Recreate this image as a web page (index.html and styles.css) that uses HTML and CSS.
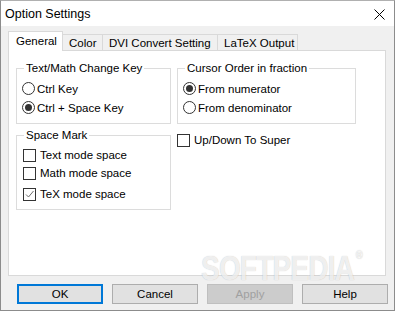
FILE: index.html
```html
<!DOCTYPE html>
<html lang="en">
  <head>
    <meta charset="UTF-8" />
    <title>Option Settings</title>
    <link rel="stylesheet" href="styles.css">
  </head>
  <body>
    <div class="window">
      <div class="titlebar">
        <span class="title">Option Settings</span>
        <svg class="close" width="11" height="11" viewBox="0 0 11 11">
          <path d="M0.5 0.5 L10.5 10.5 M10.5 0.5 L0.5 10.5" stroke="#000" stroke-width="1" fill="none" />
        </svg>
      </div>

      <div class="client">
        <div class="tabs">
          <div class="tab active">General</div>
          <div class="tab">Color</div>
          <div class="tab">DVI Convert Setting</div>
          <div class="tab">LaTeX Output</div>
        </div>

        <div class="panel">
          <div class="col col-left">
            <fieldset class="group group-key">
              <legend>Text/Math Change Key</legend>
              <label class="opt"><span class="radio"></span>Ctrl Key</label>
              <label class="opt"><span class="radio on"></span>Ctrl + Space Key</label>
            </fieldset>

            <fieldset class="group group-space">
              <legend>Space Mark</legend>
              <label class="opt chk"><span class="box"></span>Text mode space</label>
              <label class="opt chk"><span class="box"></span>Math mode space</label>
              <label class="opt chk last"><span class="box on">
                <svg width="11" height="11" viewBox="0 0 11 11">
                  <path d="M2 5.5 L4.5 8 L9.5 2" stroke="#6d6d6d" stroke-width="1" fill="none" />
                </svg>
              </span>TeX mode space</label>
            </fieldset>
          </div>

          <div class="col col-right">
            <fieldset class="group group-cursor">
              <legend>Cursor Order in fraction</legend>
              <label class="opt"><span class="radio on"></span>From numerator</label>
              <label class="opt"><span class="radio"></span>From denominator</label>
            </fieldset>
            <label class="opt chk updown"><span class="box"></span>Up/Down To Super</label>
          </div>
        </div>

        <div class="buttons">
          <button class="btn default">OK</button>
          <button class="btn">Cancel</button>
          <button class="btn" disabled>Apply</button>
          <button class="btn">Help</button>
        </div>
      </div>

      <div class="watermark">SOFTPEDIA<span class="reg">®</span></div>
    </div>
  </body>
</html>
```

FILE: styles.css
```css
body {
  margin: 0;
  font-family: "Liberation Sans", Arial, sans-serif;
  font-size: 11.5px;
  color: #000;
  background: #fff;
}

.window {
  position: relative;
  width: 395px;
  height: 311px;
  box-sizing: border-box;
  border: 1px solid #8c8c8c;
  border-top-color: #b0b0b0;
  background: #f0f0f0;
  overflow: hidden;
}

.titlebar {
  height: 25px;
  background: #fff;
  display: flex;
  align-items: center;
  justify-content: space-between;
  padding: 0 9px 0 4px;
}

.title {
  font-size: 12.5px;
}

.close {
  display: block;
  margin-top: 1px;
}

.client {
  padding: 6px 0 0 7px;
}

/* tabs */
.tabs {
  display: flex;
  align-items: flex-end;
  height: 18px;
  position: relative;
  z-index: 2;
}

.tab {
  height: 16px;
  line-height: 16px;
  box-sizing: border-box;
  border: 1px solid #d9d9d9;
  border-bottom: none;
  background: #f0f0f0;
  padding: 0 6px;
  margin-left: -1px;
  white-space: nowrap;
}

.tab:first-child {
  margin-left: 0;
}

.tab.active {
  height: 20px;
  line-height: 18px;
  margin-bottom: -1px;
  background: #fff;
  padding: 0 7px;
  position: relative;
  z-index: 3;
}

.tab:nth-child(2) { width: 41px; }
.tab:nth-child(3) { width: 116px; }
.tab:nth-child(4) { width: 81px; }
.tab.active { width: 55px; }

.panel {
  width: 378px;
  height: 226px;
  box-sizing: border-box;
  border: 1px solid #d9d9d9;
  background: #fff;
  padding: 10px 0 0 7px;
  display: flex;
  gap: 6px;
}

/* group boxes */
.group {
  margin: 0;
  border: 1px solid #dcdcdc;
  padding: 4px 0 0 5px;
  box-sizing: border-box;
}

.group legend {
  margin-left: 2px;
  padding: 0 2px;
  line-height: 14px;
}

.group-key {
  width: 155px;
  height: 63px;
}

.group-space {
  width: 155px;
  height: 82px;
  margin-top: 4px;
  padding-top: 4px;
}

.group-cursor {
  width: 179px;
  height: 63px;
}

.opt {
  display: flex;
  align-items: center;
  height: 19px;
  white-space: nowrap;
}

.chk {
  height: 18px;
  padding-left: 1px;
}

.chk.last {
  margin-top: 3px;
}

.radio {
  width: 13px;
  height: 13px;
  box-sizing: border-box;
  border: 1px solid #333;
  border-radius: 50%;
  background: #fff;
  margin-right: 2px;
  display: flex;
  align-items: center;
  justify-content: center;
}

.radio.on::after {
  content: "";
  width: 7px;
  height: 7px;
  border-radius: 50%;
  background: #333;
}

.box {
  width: 13px;
  height: 13px;
  box-sizing: border-box;
  border: 1px solid #333;
  background: #fff;
  margin-right: 4px;
  display: flex;
  align-items: center;
  justify-content: center;
}

.box svg {
  display: block;
}

.updown {
  margin-top: 7px;
  padding-left: 0;
}

/* buttons */
.buttons {
  display: flex;
  gap: 9px;
  margin: 8px 0 0 9px;
}

.btn {
  width: 86px;
  height: 20px;
  box-sizing: border-box;
  border: 1px solid #adadad;
  background: #e1e1e1;
  font-family: "Liberation Sans", Arial, sans-serif;
  font-size: 11.5px;
  color: #000;
  padding: 0;
  margin: 0;
}

.btn.default {
  border: 2px solid #0078d7;
}

.btn:disabled {
  background: #cccccc;
  border-color: #bfbfbf;
  color: #a0a0a0;
}

/* watermark over the dialog */
.watermark {
  position: absolute;
  left: 200px;
  top: 247px;
  font-family: "Liberation Sans", Arial, sans-serif;
  font-weight: bold;
  font-size: 35px;
  letter-spacing: -1px;
  color: rgba(255, 255, 255, 0.75);
  text-shadow: 0 0 1px rgba(0, 0, 0, 0.25);
  transform: scaleX(0.8);
  transform-origin: left top;
  pointer-events: none;
}

.watermark .reg {
  font-size: 12px;
  vertical-align: top;
  margin-left: 2px;
}
```
